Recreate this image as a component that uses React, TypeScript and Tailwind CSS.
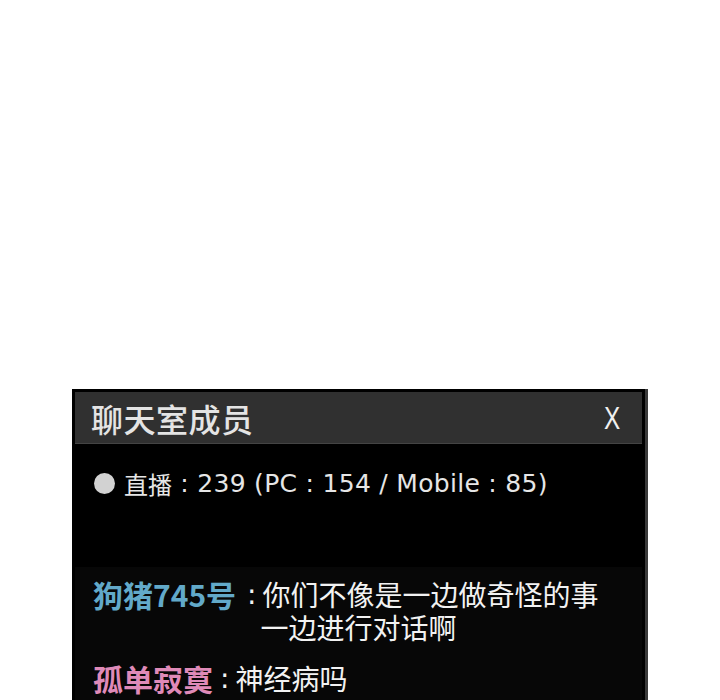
const cjk = { fontFamily: '"Noto Sans CJK SC", "Noto Sans", sans-serif' }
const mixed = { fontFamily: '"DejaVu Sans", "Noto Sans CJK SC", sans-serif' }

export default function App() {
  return (
    <div className="w-[720px] h-[700px] bg-white overflow-hidden pt-[389px] pl-[72px]" style={cjk}>
      <div className="w-[576px] h-[311px] bg-black pt-[3px] pl-[3px] pr-[3px] border-r-[3px] border-[#3a3a3a] flex flex-col">
        {/* header */}
        <div className="h-[52px] bg-[#303030] border-b border-[#444] flex items-center justify-between pl-[16px] pr-[22px]">
          <span className="text-[32px] font-medium text-[#e4e4e4] tracking-[0.5px] leading-none">聊天室成员</span>
          <span
            className="inline-block text-[32px] text-[#f0f0f0] leading-none scale-x-[0.76] origin-right"
            style={{ fontFamily: '"Liberation Sans", sans-serif' }}
          >
            X
          </span>
        </div>

        {/* viewer count */}
        <div className="h-[123px] bg-black pt-[27px] pl-[19px]">
          <div className="flex items-center text-[25px] text-[#e6e6e6] leading-none" style={mixed}>
            <span className="w-[21px] h-[21px] rounded-full bg-[#d2d2d2] mr-[9px]"></span>
            <span className="text-[24px]" style={cjk}>直播</span>
            <span className="tracking-[0.3px]">&nbsp;: 239 (PC : 154 / Mobile : 85)</span>
          </div>
        </div>

        {/* chat */}
        <div className="flex-1 bg-[#070707] pt-[11px] pl-[18px]">
          <div className="flex items-start leading-[33px]">
            <span className="text-[30px] font-bold text-[#62a9c9]">狗猪745号</span>
            <span className="text-[28px] text-[#f2f2f2] ml-[11px] mr-[6px]" style={mixed}>:</span>
            <div className="text-[28px] text-[#f2f2f2]">
              <div>你们不像是一边做奇怪的事</div>
              <div className="-ml-[2px]">一边进行对话啊</div>
            </div>
          </div>
          <div className="flex items-start leading-[33px] mt-[18px]">
            <span className="text-[30px] font-bold text-[#df8ab8]">孤单寂寞</span>
            <span className="text-[28px] text-[#f2f2f2] ml-[7px] mr-[6px]" style={mixed}>:</span>
            <span className="text-[28px] text-[#f2f2f2]">神经病吗</span>
          </div>
        </div>
      </div>
    </div>
  )
}
